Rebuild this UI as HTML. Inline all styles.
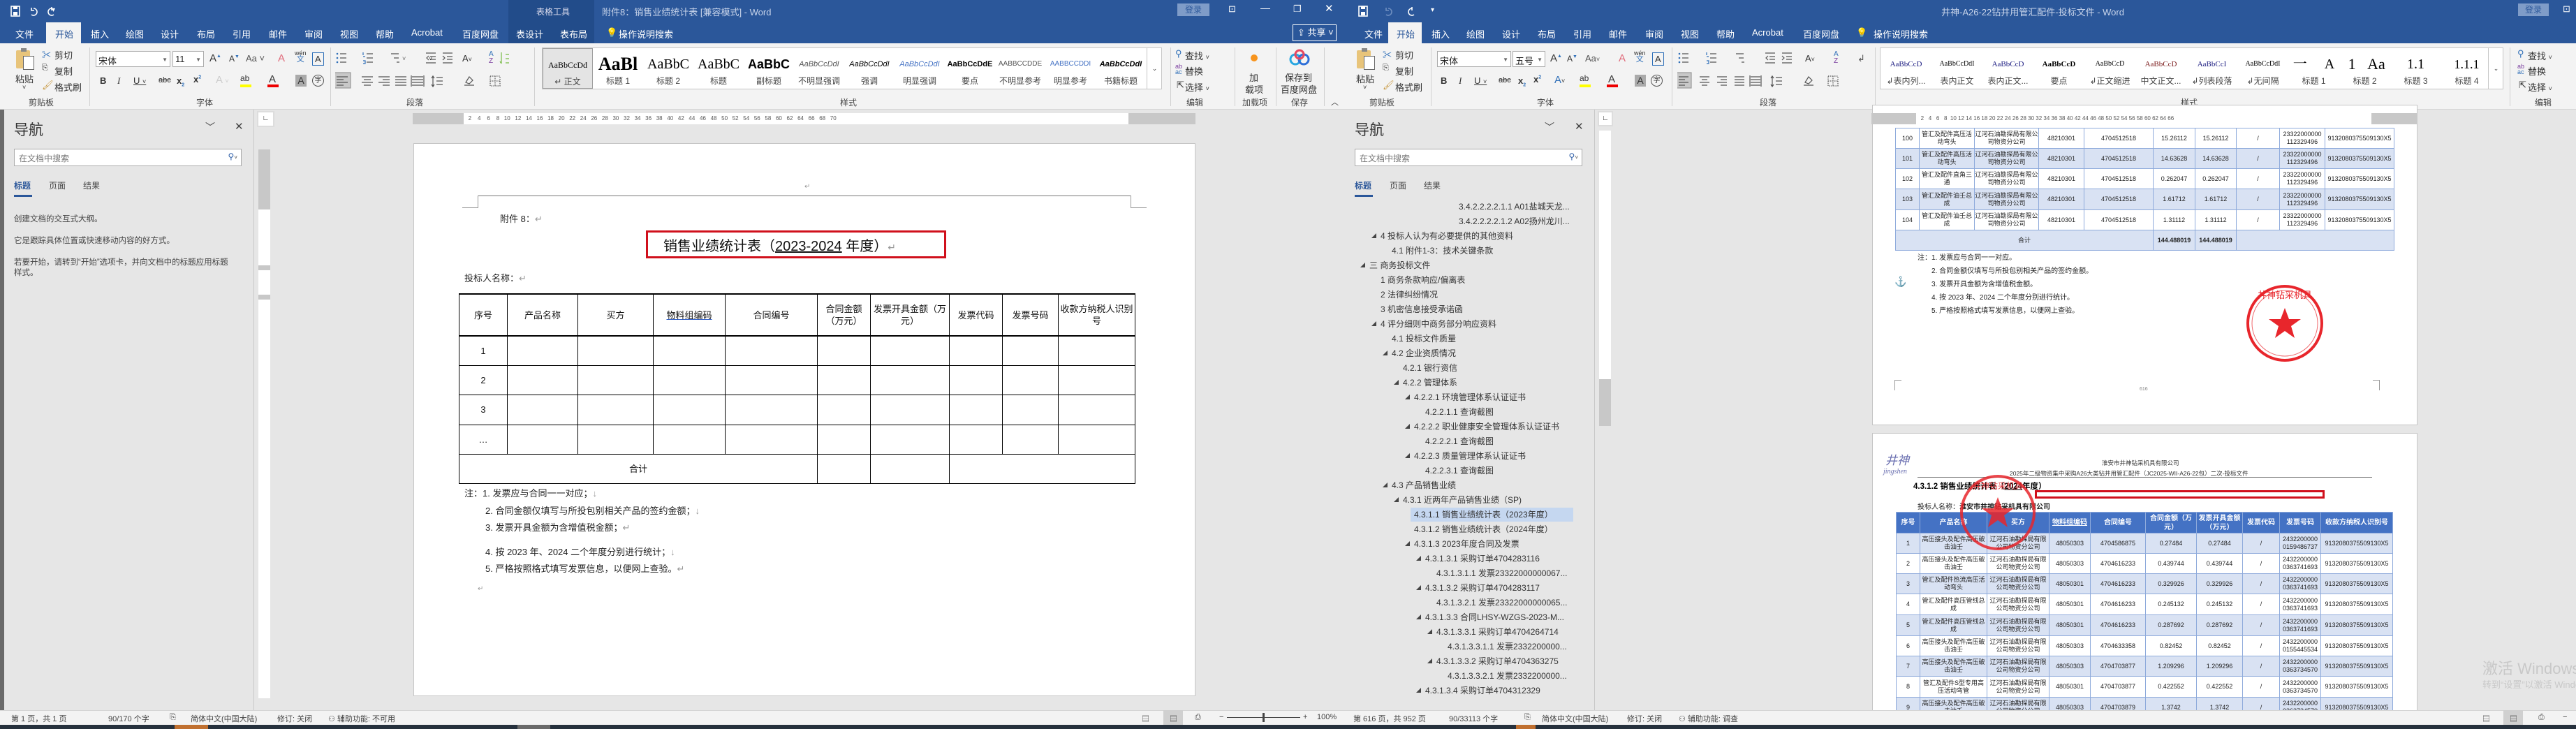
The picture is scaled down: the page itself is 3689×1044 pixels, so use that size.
<!DOCTYPE html>
<html><head><meta charset="utf-8">
<style>
*{margin:0;padding:0;box-sizing:border-box}
body{width:3689px;height:1044px;overflow:hidden;position:relative;background:#e6e6e6;font-family:"Liberation Sans","Noto Sans CJK SC",sans-serif;color:#222}
.a{position:absolute;white-space:nowrap}
.w{color:#fff}
.tab{position:absolute;top:39px;font-size:13px;color:#fff;white-space:nowrap}
.sm{font-size:12px;color:#333}
.gl{position:absolute;top:138px;font-size:12px;color:#444;white-space:nowrap}
.sep{position:absolute;top:68px;width:1px;height:84px;background:#d0d0d0}
.box{position:absolute;background:#fff;border:1px solid #ababab;font-size:13px;padding:3px 3px;color:#222}
.ic{position:absolute;font-size:13px;color:#333;white-space:nowrap}
.gal{position:absolute;top:68px;height:60px;background:#fff;border:1px solid #c6c6c6;overflow:hidden}
.gi{position:absolute;top:0;width:72px;height:58px;overflow:hidden;text-align:center}
.gi .s{position:absolute;left:0;right:0;top:8px;height:30px;line-height:30px;font-family:"Liberation Serif","Noto Serif CJK SC",serif;font-size:12px;color:#000;overflow:hidden}
.gi .l{position:absolute;left:0;right:0;top:38px;font-size:12px;color:#444}
.nt{position:absolute;font-size:12px;color:#333;white-space:nowrap}
.tri{position:absolute;font-size:7px;color:#444}
table{border-collapse:collapse;position:absolute;table-layout:fixed}
.t1 td{border:1px solid #000;font-size:13px;text-align:center;vertical-align:middle;font-family:"Liberation Sans","Noto Sans CJK SC",sans-serif;line-height:17px;color:#111}
.t1 tr.h td{border-top:2px solid #000;border-bottom:2px solid #000}
.t2 td{border:1px solid #8eaadb;font-size:9px;line-height:11px;text-align:center;vertical-align:middle;color:#222;overflow:hidden;white-space:normal;font-family:"Liberation Sans","Noto Sans CJK SC",sans-serif}
.t2 tr.b td{background:#d9e2f3}
.t2 tr.hd td{background:#4472c4;color:#fff;font-weight:bold;font-size:10px;line-height:13px}
.st{position:absolute;font-size:11px;color:#444;white-space:nowrap;top:1021px}
</style></head><body>

<!-- ============ LEFT WINDOW ============ -->
<div class="a" style="left:0;top:0;width:1930px;height:62px;background:#2b579a"></div>
<div class="a" style="left:728px;top:0;width:123px;height:62px;background:#224c8a"></div>
<div class="a w" style="left:768px;top:8px;font-size:12px;color:#dde">表格工具</div>
<div class="a" style="left:862px;top:7px;font-size:13px;color:#c8d4ea">附件8：销售业绩统计表 [兼容模式]  -  Word</div>
<!-- quick access -->
<svg class="a" style="left:14px;top:7px" width="70" height="18"><rect x="2" y="2" width="12" height="14" fill="none" stroke="#fff" stroke-width="1.6"/><rect x="5" y="2" width="6" height="4" fill="#fff"/><rect x="5" y="10" width="6" height="5" fill="#fff"/><path d="M34 5 a5 5 0 1 1 -3 9 M31 4 v4 h4" fill="none" stroke="#fff" stroke-width="1.6"/><path d="M60 5 a5 5 0 1 0 3 9 M60 3 v5" fill="none" stroke="#fff" stroke-width="1.6"/></svg>
<div class="a w" style="left:74px;top:9px;font-size:10px">▾</div>
<div class="a" style="left:1686px;top:5px;width:46px;height:18px;background:#7f9cc8;color:#2b579a;font-size:12px;text-align:center;line-height:18px">登录</div>
<div class="a w" style="left:1759px;top:5px;font-size:13px">⊡</div>
<div class="a w" style="left:1805px;top:3px;font-size:14px">—</div>
<div class="a w" style="left:1852px;top:5px;font-size:13px">❐</div>
<div class="a w" style="left:1897px;top:3px;font-size:15px">✕</div>
<!-- tabs -->
<div class="tab" style="left:22px">文件</div>
<div class="a" style="left:66px;top:32px;width:50px;height:30px;background:#f3f3f3"></div>
<div class="tab" style="left:79px;color:#2b579a">开始</div>
<div class="tab" style="left:130px">插入</div><div class="tab" style="left:180px">绘图</div><div class="tab" style="left:230px">设计</div><div class="tab" style="left:282px">布局</div><div class="tab" style="left:333px">引用</div><div class="tab" style="left:385px">邮件</div><div class="tab" style="left:436px">审阅</div><div class="tab" style="left:487px">视图</div><div class="tab" style="left:538px">帮助</div><div class="tab" style="left:589px">Acrobat</div><div class="tab" style="left:662px">百度网盘</div><div class="tab" style="left:739px">表设计</div><div class="tab" style="left:802px">表布局</div>
<div class="tab" style="left:868px">💡</div><div class="tab" style="left:886px">操作说明搜索</div>
<div class="a" style="left:1851px;top:35px;width:63px;height:24px;border:1px solid #fff;color:#fff;font-size:13px;line-height:22px;padding-left:6px">⇪ 共享 ˅</div>
<!-- ribbon -->
<div class="a" style="left:0;top:62px;width:1930px;height:95px;background:#f3f3f3;border-bottom:1px solid #d5d5d5"></div>
<!-- clipboard -->
<div class="a" style="left:23px;top:72px;width:20px;height:26px;background:#e8c47a;border-radius:2px"></div>
<div class="a" style="left:30px;top:69px;width:8px;height:5px;background:#888"></div>
<div class="a" style="left:33px;top:80px;width:16px;height:20px;background:#fff;border:1px solid #666"></div>
<div class="ic" style="left:22px;top:103px">粘贴</div><div class="ic" style="left:32px;top:120px;font-size:9px">˅</div>
<div class="ic" style="left:60px;top:68px;color:#2f6fb8">✂</div><div class="ic" style="left:78px;top:69px">剪切</div>
<div class="ic" style="left:60px;top:91px;font-size:11px">⎘</div><div class="ic" style="left:78px;top:92px">复制</div>
<div class="ic" style="left:60px;top:114px;color:#c99a44">🖌</div><div class="ic" style="left:78px;top:115px">格式刷</div>
<div class="gl" style="left:41px">剪贴板</div>
<div class="sep" style="left:128px"></div>
<!-- font group -->
<div class="box" style="left:137px;top:73px;width:107px;height:23px">宋体<span style="float:right;font-size:8px;color:#666;margin-top:4px">▼</span></div>
<div class="box" style="left:247px;top:73px;width:45px;height:23px">11<span style="float:right;font-size:8px;color:#666;margin-top:4px">▼</span></div>
<div class="ic" style="left:300px;top:75px;font-size:15px">A<sup style="font-size:7px;color:#2f6fb8">▲</sup></div>
<div class="ic" style="left:328px;top:77px;font-size:12px">A<sup style="font-size:7px;color:#2f6fb8">▼</sup></div>
<div class="ic" style="left:352px;top:76px;color:#555">Aa ˅</div>
<div class="ic" style="left:398px;top:75px;color:#e06a7a;font-size:15px">A</div>
<div class="ic" style="left:422px;top:72px;font-size:9px;line-height:9px;text-align:center">wén<br><span style="color:#2f6fb8;font-size:11px">文</span></div>
<div class="ic" style="left:447px;top:75px;border:1px solid #2f6fb8;padding:0 3px;font-size:13px;line-height:17px">A</div>
<div class="ic" style="left:143px;top:108px;font-weight:bold">B</div>
<div class="ic" style="left:168px;top:108px;font-style:italic;font-family:'Liberation Serif',serif">I</div>
<div class="ic" style="left:191px;top:108px;text-decoration:underline">U <span style="font-size:9px">˅</span></div>
<div class="ic" style="left:227px;top:109px;font-size:11px;text-decoration:line-through">abc</div>
<div class="ic" style="left:253px;top:108px;font-weight:bold">x<sub style="font-size:7px;color:#2f6fb8">2</sub></div>
<div class="ic" style="left:277px;top:106px;font-weight:bold">x<sup style="font-size:7px;color:#2f6fb8">2</sup></div>
<div class="ic" style="left:309px;top:106px;font-size:15px;color:#ccc">A <span style="font-size:9px">˅</span></div>
<div class="ic" style="left:344px;top:105px;font-size:12px">ab</div><div class="a" style="left:344px;top:121px;width:16px;height:4px;background:#ffff00"></div>
<div class="ic" style="left:385px;top:105px;font-size:15px">A</div><div class="a" style="left:383px;top:121px;width:16px;height:4px;background:#e00"></div>
<div class="a" style="left:423px;top:107px;width:16px;height:17px;background:#aaa;font-size:14px;text-align:center;line-height:17px;color:#333">A</div>
<div class="ic" style="left:447px;top:107px;border:1px solid #555;border-radius:50%;width:17px;height:17px;font-size:10px;text-align:center;line-height:15px">字</div>
<div class="gl" style="left:281px">字体</div>
<div class="sep" style="left:473px"></div>
<!-- paragraph -->
<svg class="a" style="left:480px;top:74px" width="290" height="56" stroke="#555" stroke-width="1.2" fill="none">
<g><circle cx="3" cy="3" r="1.3" fill="#2f6fb8" stroke="none"/><circle cx="3" cy="9" r="1.3" fill="#2f6fb8" stroke="none"/><circle cx="3" cy="15" r="1.3" fill="#2f6fb8" stroke="none"/><path d="M7 3h9M7 9h9M7 15h9"/></g>
<g transform="translate(38,0)"><path d="M7 3h9M7 9h9M7 15h9"/><path d="M2 1v4M2 7h3M2 13h3v4h-3" stroke="#2f6fb8"/></g>
<g transform="translate(76,0)"><path d="M4 3h11M8 9h7M12 15h4"/></g>
<g transform="translate(128,0)"><path d="M2 2h14M8 7h8M8 11h8M2 16h14M6 6l-3 3 3 3" /></g>
<g transform="translate(152,0)"><path d="M2 2h14M8 7h8M8 11h8M2 16h14M2 6l3 3-3 3" /></g>
<g transform="translate(234,0)"><path d="M4 1v16M4 17l-2-3M10 4h5M10 10h5M10 16h5" stroke="#7b4"/></g>
<g transform="translate(0,34)"><rect x="-2" y="-4" width="24" height="22" fill="#c8c8c8" stroke="#999"/><path d="M2 2h16M2 6h10M2 10h16M2 14h10"/></g>
<g transform="translate(36,34)"><path d="M2 2h16M5 6h10M2 10h16M5 14h10"/></g>
<g transform="translate(60,34)"><path d="M2 2h16M8 6h10M2 10h16M8 14h10"/></g>
<g transform="translate(84,34)"><path d="M2 2h16M2 6h16M2 10h16M2 14h16"/></g>
<g transform="translate(108,34)"><path d="M2 2h16M2 6h16M2 10h16M2 14h16M1 0v16M19 0v16"/></g>
<g transform="translate(136,34)"><path d="M4 1v15M2 4l2-3 2 3M2 13l2 3 2-3M9 3h9M9 8h9M9 13h9" /></g>
<g transform="translate(182,34)"><path d="M3 14h14M5 10l5-8 5 5-5 5z"/></g>
<g transform="translate(220,34)" stroke-dasharray="1.5 1.5"><rect x="2" y="1" width="14" height="14"/><path d="M9 1v14M2 8h14"/></g>
</svg>
<div class="ic" style="left:576px;top:79px;font-size:9px;color:#666">˅</div><div class="ic" style="left:614px;top:79px;font-size:9px">˅</div><div class="ic" style="left:580px;top:110px;font-size:9px"></div>
<div class="ic" style="left:662px;top:76px;font-size:13px">A<span style="font-size:9px">˅</span></div>
<div class="ic" style="left:700px;top:73px;font-size:10px;line-height:10px;color:#2f6fb8">A<br><span style="color:#7b3fa0">Z</span></div>
<div class="gl" style="left:582px">段落</div>
<div class="sep" style="left:765px"></div>
<!-- styles gallery -->
<div class="gal" style="left:776px;width:888px">
 <div class="gi" style="left:0;background:#e4e4e4;border:1px solid #a0a0a0"><div class="s">AaBbCcDd</div><div class="l">↵ 正文</div></div>
 <div class="gi" style="left:72px"><div class="s" style="font-size:26px;font-weight:bold">AaBl</div><div class="l">标题 1</div></div>
 <div class="gi" style="left:144px"><div class="s" style="font-size:20px">AaBbC</div><div class="l">标题 2</div></div>
 <div class="gi" style="left:216px"><div class="s" style="font-size:20px">AaBbC</div><div class="l">标题</div></div>
 <div class="gi" style="left:288px"><div class="s" style="font-size:18px;font-weight:bold;font-family:'Liberation Sans',sans-serif">AaBbC</div><div class="l">副标题</div></div>
 <div class="gi" style="left:360px"><div class="s" style="font-style:italic;color:#555;font-family:'Liberation Sans',sans-serif;font-size:11px">AaBbCcDdI</div><div class="l">不明显强调</div></div>
 <div class="gi" style="left:432px"><div class="s" style="font-style:italic;font-family:'Liberation Sans',sans-serif;font-size:11px">AaBbCcDdI</div><div class="l">强调</div></div>
 <div class="gi" style="left:504px"><div class="s" style="font-style:italic;color:#4472c4;font-family:'Liberation Sans',sans-serif;font-size:11px">AaBbCcDdI</div><div class="l">明显强调</div></div>
 <div class="gi" style="left:576px"><div class="s" style="font-weight:bold;font-family:'Liberation Sans',sans-serif;font-size:11px">AaBbCcDdE</div><div class="l">要点</div></div>
 <div class="gi" style="left:648px"><div class="s" style="color:#555;font-family:'Liberation Sans',sans-serif;font-size:10px">AABBCCDDE</div><div class="l">不明显参考</div></div>
 <div class="gi" style="left:720px"><div class="s" style="color:#4472c4;font-family:'Liberation Sans',sans-serif;font-size:10px">AABBCCDDI</div><div class="l">明显参考</div></div>
 <div class="gi" style="left:792px;width:72px"><div class="s" style="font-weight:bold;font-style:italic;font-family:'Liberation Sans',sans-serif;font-size:11px">AaBbCcDdI</div><div class="l">书籍标题</div></div>
 <div class="a" style="left:865px;top:0;width:22px;height:58px;border-left:1px solid #c6c6c6;font-size:9px;text-align:center;padding-top:24px;color:#444">⌄</div>
</div>
<div class="gl" style="left:1203px">样式</div>
<div class="sep" style="left:1676px"></div>
<div class="ic" style="left:1683px;top:69px;color:#2f6fb8">⚲</div><div class="ic" style="left:1697px;top:70px">查找 <span style="font-size:9px">˅</span></div>
<div class="ic" style="left:1683px;top:91px;font-size:9px;line-height:8px;color:#7b3fa0">ab<br><span style="color:#2f6fb8">ac</span></div><div class="ic" style="left:1697px;top:92px">替换</div>
<div class="ic" style="left:1685px;top:114px">⇱</div><div class="ic" style="left:1697px;top:115px">选择 <span style="font-size:9px">˅</span></div>
<div class="gl" style="left:1699px">编辑</div>
<div class="sep" style="left:1768px"></div>
<div class="a" style="left:1791px;top:78px;width:10px;height:10px;border-radius:50%;background:#f7941d"></div>
<div class="ic" style="left:1789px;top:101px">加</div><div class="ic" style="left:1783px;top:118px">载项</div>
<div class="gl" style="left:1779px">加载项</div>
<div class="sep" style="left:1827px"></div>
<svg class="a" style="left:1846px;top:70px" width="30" height="26"><circle cx="9" cy="15" r="7" fill="none" stroke="#29a7e1" stroke-width="3"/><circle cx="21" cy="15" r="7" fill="none" stroke="#2f6fd8" stroke-width="3"/><circle cx="15" cy="8" r="6" fill="none" stroke="#e8465f" stroke-width="3"/></svg>
<div class="ic" style="left:1840px;top:101px">保存到</div><div class="ic" style="left:1834px;top:118px">百度网盘</div>
<div class="gl" style="left:1849px">保存</div>
<div class="sep" style="left:1896px"></div>
<div class="ic" style="left:1906px;top:138px;font-size:11px">︿</div>

<!-- left nav pane -->
<div class="a" style="left:0;top:157px;width:6px;height:860px;background:#6a6a6a"></div>
<div class="a" style="left:6px;top:157px;width:358px;height:860px;background:#e6e6e6;border-right:1px solid #c8c8c8"></div>
<div class="a" style="left:20px;top:170px;font-size:21px;color:#333">导航</div>
<div class="a" style="left:294px;top:172px;font-size:14px;color:#444">﹀</div>
<div class="a" style="left:336px;top:172px;font-size:15px;color:#444">✕</div>
<div class="a" style="left:20px;top:213px;width:326px;height:25px;background:#fff;border:1px solid #ababab;font-size:12px;color:#777;padding:4px 6px">在文档中搜索<span style="position:absolute;right:5px;top:3px;color:#2f5fa8">⚲<span style="font-size:8px;color:#444">˅</span></span></div>
<div class="a" style="left:20px;top:257px;font-size:12px;color:#2b579a;font-weight:bold">标题</div>
<div class="a" style="left:20px;top:279px;width:26px;height:3px;background:#2b579a"></div>
<div class="a" style="left:70px;top:257px;font-size:12px;color:#444">页面</div>
<div class="a" style="left:119px;top:257px;font-size:12px;color:#444">结果</div>
<div class="a" style="left:20px;top:305px;font-size:11.5px;color:#444">创建文档的交互式大纲。</div>
<div class="a" style="left:20px;top:336px;font-size:11.5px;color:#444">它是跟踪具体位置或快速移动内容的好方式。</div>
<div class="a" style="left:20px;top:367px;font-size:11.5px;color:#444">若要开始，请转到“开始”选项卡，并向文档中的标题应用标题</div>
<div class="a" style="left:20px;top:382px;font-size:11.5px;color:#444">样式。</div>

<!-- left doc area rulers -->
<div class="a" style="left:368px;top:159px;width:25px;height:23px;background:#fff;border:2px solid #ddd;font-size:10px;text-align:center;line-height:18px">∟</div>
<div class="a" style="left:591px;top:162px;width:1121px;height:16px;background:#c8c8c8"></div>
<div class="a" style="left:664px;top:162px;width:952px;height:16px;background:#fff;font-size:8px;color:#555;line-height:16px;letter-spacing:0">&nbsp;&nbsp;&nbsp;2&nbsp;&nbsp;&nbsp;&nbsp;4&nbsp;&nbsp;&nbsp;&nbsp;6&nbsp;&nbsp;&nbsp;&nbsp;8&nbsp;&nbsp;&nbsp;10&nbsp;&nbsp;&nbsp;12&nbsp;&nbsp;&nbsp;14&nbsp;&nbsp;&nbsp;16&nbsp;&nbsp;&nbsp;18&nbsp;&nbsp;&nbsp;20&nbsp;&nbsp;&nbsp;22&nbsp;&nbsp;&nbsp;24&nbsp;&nbsp;&nbsp;26&nbsp;&nbsp;&nbsp;28&nbsp;&nbsp;&nbsp;30&nbsp;&nbsp;&nbsp;32&nbsp;&nbsp;&nbsp;34&nbsp;&nbsp;&nbsp;36&nbsp;&nbsp;&nbsp;38&nbsp;&nbsp;&nbsp;40&nbsp;&nbsp;&nbsp;42&nbsp;&nbsp;&nbsp;44&nbsp;&nbsp;&nbsp;46&nbsp;&nbsp;&nbsp;48&nbsp;&nbsp;&nbsp;50&nbsp;&nbsp;&nbsp;52&nbsp;&nbsp;&nbsp;54&nbsp;&nbsp;&nbsp;56&nbsp;&nbsp;&nbsp;58&nbsp;&nbsp;&nbsp;60&nbsp;&nbsp;&nbsp;62&nbsp;&nbsp;&nbsp;64&nbsp;&nbsp;&nbsp;66&nbsp;&nbsp;&nbsp;68&nbsp;&nbsp;&nbsp;70</div>
<div class="a" style="left:370px;top:214px;width:17px;height:86px;background:#c8c8c8"></div>
<div class="a" style="left:370px;top:300px;width:17px;height:700px;background:#fff"></div>
<div class="a" style="left:370px;top:380px;width:17px;height:7px;background:#c8c8c8"></div>
<div class="a" style="left:370px;top:422px;width:17px;height:7px;background:#c8c8c8"></div>
<!-- left page -->
<div class="a" style="left:592px;top:205px;width:1120px;height:792px;background:#fff;border:1px solid #c6c6c6"></div>
<div class="a" style="left:1152px;top:262px;font-size:10px;color:#999">↵</div>
<div class="a" style="left:685px;top:280px;width:934px;height:1px;background:#777"></div>
<div class="a" style="left:662px;top:280px;width:23px;height:18px;border-right:1px solid #999;border-bottom:1px solid #999"></div>
<div class="a" style="left:1619px;top:280px;width:23px;height:18px;border-left:1px solid #999;border-bottom:1px solid #999"></div>
<div class="a" style="left:716px;top:303px;font-size:13px">附件 8：<span style="color:#999">↵</span></div>
<div class="a" style="left:925px;top:330px;width:430px;height:40px;border:3px solid #d0101c"></div>
<div class="a" style="left:950px;top:336px;font-size:20px;color:#111">销售业绩统计表（<u>2023-2024</u> 年度）<span style="color:#999;font-size:14px">↵</span></div>
<div class="a" style="left:665px;top:388px;font-size:13px">投标人名称：<span style="color:#999">↵</span></div>
<table class="t1" style="left:657px;top:420px;width:968px">
<colgroup><col style="width:69px"><col style="width:101px"><col style="width:108px"><col style="width:103px"><col style="width:132px"><col style="width:76px"><col style="width:113px"><col style="width:76px"><col style="width:80px"><col style="width:110px"></colgroup>
<tr class="h" style="height:60px"><td>序号</td><td>产品名称</td><td>买方</td><td><u style="text-decoration-color:#2f5fc8">物料组编码</u></td><td>合同编号</td><td>合同金额（万元）</td><td>发票开具金额（万元）</td><td>发票代码</td><td>发票号码</td><td>收款方纳税人识别号</td></tr>
<tr style="height:42px"><td>1</td><td></td><td></td><td></td><td></td><td></td><td></td><td></td><td></td><td></td></tr>
<tr style="height:42px"><td>2</td><td></td><td></td><td></td><td></td><td></td><td></td><td></td><td></td><td></td></tr>
<tr style="height:43px"><td>3</td><td></td><td></td><td></td><td></td><td></td><td></td><td></td><td></td><td></td></tr>
<tr style="height:42px"><td>…</td><td></td><td></td><td></td><td></td><td></td><td></td><td></td><td></td><td></td></tr>
<tr style="height:42px"><td colspan="5">合计</td><td></td><td></td><td colspan="3"></td></tr>
</table>
<div class="a" style="left:665px;top:696px;font-size:13px">注：1. 发票应与合同一一对应；<span style="color:#999">↓</span></div>
<div class="a" style="left:695px;top:721px;font-size:13px">2. 合同金额仅填写与所投包别相关产品的签约金额；<span style="color:#999">↓</span></div>
<div class="a" style="left:695px;top:745px;font-size:13px">3. 发票开具金额为含增值税金额；<span style="color:#999">↵</span></div>
<div class="a" style="left:695px;top:780px;font-size:13px">4. 按 2023 年、2024 二个年度分别进行统计；<span style="color:#999">↓</span></div>
<div class="a" style="left:695px;top:804px;font-size:13px">5. 严格按照格式填写发票信息，以便网上查验。<span style="color:#999">↵</span></div>
<div class="a" style="left:684px;top:838px;font-size:10px;color:#999">↵</div>

<!-- left status bar -->
<div class="a" style="left:0;top:1017px;width:1930px;height:21px;background:#f3f3f3;border-top:1px solid #d5d5d5"></div>
<div class="st" style="left:16px">第 1 页，共 1 页</div>
<div class="st" style="left:155px">90/170 个字</div>
<div class="st" style="left:243px">⎘</div>
<div class="st" style="left:273px">简体中文(中国大陆)</div>
<div class="st" style="left:397px">修订: 关闭</div>
<div class="st" style="left:470px">⚇ 辅助功能: 不可用</div>
<div class="st" style="left:1635px">▤</div>
<div class="a" style="left:1666px;top:1017px;width:28px;height:21px;background:#d0d0d0"></div>
<div class="st" style="left:1675px">▤</div>
<div class="st" style="left:1711px">⎙</div>
<div class="st" style="left:1746px">−</div>
<div class="a" style="left:1757px;top:1027px;width:105px;height:1px;background:#444"></div>
<div class="a" style="left:1808px;top:1021px;width:3px;height:13px;background:#444"></div>
<div class="st" style="left:1866px">+</div>
<div class="st" style="left:1886px">100%</div>

<!-- ============ RIGHT WINDOW ============ -->
<div class="a" style="left:1930px;top:0;width:1759px;height:62px;background:#2b579a"></div>
<svg class="a" style="left:1944px;top:7px" width="120" height="18"><rect x="2" y="2" width="12" height="14" fill="none" stroke="#fff" stroke-width="1.6"/><rect x="5" y="2" width="6" height="4" fill="#fff"/><rect x="5" y="10" width="6" height="5" fill="#fff"/><path d="M44 5 a5 5 0 1 1 -3 9 M41 4 v4 h4" fill="none" stroke="#6f8fc0" stroke-width="1.6"/><path d="M78 5 a5 5 0 1 0 3 9 M78 3 v5" fill="none" stroke="#fff" stroke-width="1.6"/></svg>
<div class="a w" style="left:2049px;top:9px;font-size:10px">▾</div>
<div class="a" style="left:2780px;top:7px;font-size:13px;color:#c8d4ea">井神-A26-22钻井用管汇配件-投标文件  -  Word</div>
<div class="a" style="left:3606px;top:5px;width:44px;height:18px;background:#7f9cc8;color:#2b579a;font-size:12px;text-align:center;line-height:18px">登录</div>
<div class="a w" style="left:3670px;top:5px;font-size:13px">⊡</div>
<div class="tab" style="left:1954px">文件</div>
<div class="a" style="left:1988px;top:32px;width:48px;height:30px;background:#f3f3f3"></div>
<div class="tab" style="left:2000px;color:#2b579a">开始</div>
<div class="tab" style="left:2050px">插入</div><div class="tab" style="left:2100px">绘图</div><div class="tab" style="left:2151px">设计</div><div class="tab" style="left:2202px">布局</div><div class="tab" style="left:2253px">引用</div><div class="tab" style="left:2304px">邮件</div><div class="tab" style="left:2356px">审阅</div><div class="tab" style="left:2407px">视图</div><div class="tab" style="left:2458px">帮助</div><div class="tab" style="left:2509px">Acrobat</div><div class="tab" style="left:2582px">百度网盘</div><div class="tab" style="left:2658px">💡</div><div class="tab" style="left:2683px">操作说明搜索</div>
<div class="a" style="left:1930px;top:62px;width:1759px;height:95px;background:#f3f3f3;border-bottom:1px solid #d5d5d5"></div>
<!-- clipboard -->
<div class="a" style="left:1943px;top:72px;width:20px;height:26px;background:#e8c47a;border-radius:2px"></div>
<div class="a" style="left:1950px;top:69px;width:8px;height:5px;background:#888"></div>
<div class="a" style="left:1953px;top:80px;width:16px;height:20px;background:#fff;border:1px solid #666"></div>
<div class="ic" style="left:1942px;top:103px">粘贴</div><div class="ic" style="left:1952px;top:120px;font-size:9px">˅</div>
<div class="ic" style="left:1980px;top:68px;color:#2f6fb8">✂</div><div class="ic" style="left:1998px;top:69px">剪切</div>
<div class="ic" style="left:1980px;top:91px;font-size:11px">⎘</div><div class="ic" style="left:1998px;top:92px">复制</div>
<div class="ic" style="left:1980px;top:114px;color:#c99a44">🖌</div><div class="ic" style="left:1998px;top:115px">格式刷</div>
<div class="gl" style="left:1961px">剪贴板</div>
<div class="sep" style="left:2049px"></div>
<div class="box" style="left:2058px;top:73px;width:106px;height:23px">宋体<span style="float:right;font-size:8px;color:#666;margin-top:4px">▼</span></div>
<div class="box" style="left:2166px;top:73px;width:47px;height:23px">五号<span style="float:right;font-size:8px;color:#666;margin-top:4px">▼</span></div>
<div class="ic" style="left:2220px;top:75px;font-size:15px">A<sup style="font-size:7px;color:#2f6fb8">▲</sup></div>
<div class="ic" style="left:2244px;top:77px;font-size:12px">A<sup style="font-size:7px;color:#2f6fb8">▼</sup></div>
<div class="ic" style="left:2270px;top:76px;color:#555">Aa<span style="font-size:9px">˅</span></div>
<div class="ic" style="left:2318px;top:75px;color:#e06a7a;font-size:15px">A</div>
<div class="ic" style="left:2340px;top:72px;font-size:9px;line-height:9px;text-align:center">wén<br><span style="color:#2f6fb8;font-size:11px">文</span></div>
<div class="ic" style="left:2366px;top:75px;border:1px solid #2f6fb8;padding:0 3px;font-size:13px;line-height:17px">A</div>
<div class="ic" style="left:2063px;top:108px;font-weight:bold">B</div>
<div class="ic" style="left:2089px;top:108px;font-style:italic;font-family:'Liberation Serif',serif">I</div>
<div class="ic" style="left:2111px;top:108px;text-decoration:underline">U <span style="font-size:9px">˅</span></div>
<div class="ic" style="left:2146px;top:109px;font-size:11px;text-decoration:line-through">abc</div>
<div class="ic" style="left:2174px;top:108px;font-weight:bold">x<sub style="font-size:7px;color:#2f6fb8">2</sub></div>
<div class="ic" style="left:2196px;top:106px;font-weight:bold">x<sup style="font-size:7px;color:#2f6fb8">2</sup></div>
<div class="ic" style="left:2226px;top:106px;font-size:15px;color:#2f6fb8">A<span style="font-size:9px;color:#333">˅</span></div>
<div class="ic" style="left:2262px;top:105px;font-size:12px">ab</div><div class="a" style="left:2262px;top:121px;width:16px;height:4px;background:#ffff00"></div>
<div class="ic" style="left:2303px;top:105px;font-size:15px">A</div><div class="a" style="left:2301px;top:121px;width:16px;height:4px;background:#e00"></div>
<div class="a" style="left:2341px;top:107px;width:16px;height:17px;background:#aaa;font-size:14px;text-align:center;line-height:17px;color:#333">A</div>
<div class="ic" style="left:2364px;top:107px;border:1px solid #555;border-radius:50%;width:17px;height:17px;font-size:10px;text-align:center;line-height:15px">字</div>
<div class="gl" style="left:2201px">字体</div>
<div class="sep" style="left:2394px"></div>
<svg class="a" style="left:2402px;top:74px" width="280" height="56" stroke="#555" stroke-width="1.2" fill="none">
<g><circle cx="3" cy="3" r="1.3" fill="#2f6fb8" stroke="none"/><circle cx="3" cy="9" r="1.3" fill="#2f6fb8" stroke="none"/><circle cx="3" cy="15" r="1.3" fill="#2f6fb8" stroke="none"/><path d="M7 3h9M7 9h9M7 15h9"/></g>
<g transform="translate(40,0)"><path d="M7 3h9M7 9h9M7 15h9"/><path d="M2 1v4M2 7h3M2 13h3v4h-3" stroke="#2f6fb8"/></g>
<g transform="translate(80,0)"><path d="M4 3h11M8 9h7M12 15h4"/></g>
<g transform="translate(124,0)"><path d="M2 2h14M8 7h8M8 11h8M2 16h14M6 6l-3 3 3 3" /></g>
<g transform="translate(148,0)"><path d="M2 2h14M8 7h8M8 11h8M2 16h14M2 6l3 3-3 3" /></g>
<g transform="translate(0,34)"><rect x="-2" y="-4" width="22" height="22" fill="#c8c8c8" stroke="#999"/><path d="M2 2h14M2 6h9M2 10h14M2 14h9"/></g>
<g transform="translate(30,34)"><path d="M2 2h14M5 6h8M2 10h14M5 14h8"/></g>
<g transform="translate(55,34)"><path d="M2 2h14M7 6h9M2 10h14M7 14h9"/></g>
<g transform="translate(80,34)"><path d="M2 2h14M2 6h14M2 10h14M2 14h14"/></g>
<g transform="translate(103,34)"><path d="M2 2h14M2 6h14M2 10h14M2 14h14M1 0v16M17 0v16"/></g>
<g transform="translate(132,34)"><path d="M4 1v15M2 4l2-3 2 3M2 13l2 3 2-3M9 3h9M9 8h9M9 13h9" /></g>
<g transform="translate(178,34)"><path d="M3 14h14M5 10l5-8 5 5-5 5z"/></g>
<g transform="translate(214,34)" stroke-dasharray="1.5 1.5"><rect x="2" y="1" width="14" height="14"/><path d="M9 1v14M2 8h14"/></g>
</svg>
<div class="ic" style="left:2585px;top:76px;font-size:13px">A<span style="font-size:9px">˅</span></div>
<div class="ic" style="left:2626px;top:73px;font-size:10px;line-height:10px;color:#2f6fb8">A<br><span style="color:#7b3fa0">Z</span></div>
<div class="ic" style="left:2660px;top:76px;color:#555">↲</div>
<div class="gl" style="left:2520px">段落</div>
<div class="sep" style="left:2685px"></div>
<div class="gal" style="left:2692px;width:893px">
 <div class="gi" style="left:0;width:73px"><div class="s" style="font-size:11px;color:#1a1a80">AaBbCcD</div><div class="l">↲表内列...</div></div>
 <div class="gi" style="left:73px;width:73px"><div class="s" style="font-size:10px">AaBbCcDdI</div><div class="l">表内正文</div></div>
 <div class="gi" style="left:146px;width:73px"><div class="s" style="font-size:11px;color:#1a1a80">AaBbCcD</div><div class="l">表内正文...</div></div>
 <div class="gi" style="left:219px;width:73px"><div class="s" style="font-size:11px;font-weight:bold">AaBbCcD</div><div class="l">要点</div></div>
 <div class="gi" style="left:292px;width:73px"><div class="s" style="font-size:10px">AaBbCcD</div><div class="l">↲正文缩进</div></div>
 <div class="gi" style="left:365px;width:73px"><div class="s" style="font-size:11px;color:#7a1a1a">AaBbCcD</div><div class="l">中文正文...</div></div>
 <div class="gi" style="left:438px;width:73px"><div class="s" style="font-size:11px;color:#1a1a80">AaBbCcI</div><div class="l">↲列表段落</div></div>
 <div class="gi" style="left:511px;width:73px"><div class="s" style="font-size:10px">AaBbCcDdI</div><div class="l">↲无间隔</div></div>
 <div class="gi" style="left:584px;width:73px"><div class="s" style="font-size:20px">一&nbsp;&nbsp;&nbsp;&nbsp;&nbsp;A</div><div class="l">标题 1</div></div>
 <div class="gi" style="left:657px;width:73px"><div class="s" style="font-size:22px">&nbsp;1&nbsp;&nbsp;&nbsp;Aa</div><div class="l">标题 2</div></div>
 <div class="gi" style="left:730px;width:73px"><div class="s" style="font-size:20px">1.1</div><div class="l">标题 3</div></div>
 <div class="gi" style="left:803px;width:73px"><div class="s" style="font-size:18px">1.1.1</div><div class="l">标题 4</div></div>
 <div class="a" style="left:870px;top:0;width:22px;height:58px;border-left:1px solid #c6c6c6;font-size:9px;text-align:center;padding-top:24px;color:#444">⌄</div>
</div>
<div class="gl" style="left:3123px">样式</div>
<div class="sep" style="left:3594px"></div>
<div class="ic" style="left:3605px;top:69px;color:#2f6fb8">⚲</div><div class="ic" style="left:3620px;top:70px">查找 <span style="font-size:9px">˅</span></div>
<div class="ic" style="left:3605px;top:91px;font-size:9px;line-height:8px;color:#7b3fa0">ab<br><span style="color:#2f6fb8">ac</span></div><div class="ic" style="left:3620px;top:92px">替换</div>
<div class="ic" style="left:3607px;top:114px">⇱</div><div class="ic" style="left:3620px;top:115px">选择 <span style="font-size:9px">˅</span></div>
<div class="gl" style="left:3630px">编辑</div>

<!-- right nav -->
<div class="a" style="left:1930px;top:157px;width:354px;height:860px;background:#e6e6e6;border-right:1px solid #c8c8c8"></div>
<div class="a" style="left:1940px;top:170px;font-size:21px;color:#333">导航</div>
<div class="a" style="left:2212px;top:172px;font-size:14px;color:#444">﹀</div>
<div class="a" style="left:2255px;top:172px;font-size:15px;color:#444">✕</div>
<div class="a" style="left:1940px;top:213px;width:326px;height:25px;background:#fff;border:1px solid #ababab;font-size:12px;color:#777;padding:4px 6px">在文档中搜索<span style="position:absolute;right:5px;top:3px;color:#2f5fa8">⚲<span style="font-size:8px;color:#444">˅</span></span></div>
<div class="a" style="left:1940px;top:257px;font-size:12px;color:#2b579a;font-weight:bold">标题</div>
<div class="a" style="left:1940px;top:279px;width:26px;height:3px;background:#2b579a"></div>
<div class="a" style="left:1990px;top:257px;font-size:12px;color:#444">页面</div>
<div class="a" style="left:2039px;top:257px;font-size:12px;color:#444">结果</div>
<div class="a" style="left:2020px;top:727px;width:233px;height:20px;background:#c5d7f0"></div>
<div class="nt" style="left:2089px;top:287px">3.4.2.2.2.2.1.1 A01盐城天龙...</div>
<div class="nt" style="left:2089px;top:308px">3.4.2.2.2.2.1.2 A02扬州龙川...</div>
<div class="tri" style="left:1964px;top:333px">◢</div><div class="nt" style="left:1977px;top:329px">4 投标人认为有必要提供的其他资料</div>
<div class="nt" style="left:1993px;top:350px">4.1 附件1-3：技术关键条款</div>
<div class="tri" style="left:1948px;top:375px">◢</div><div class="nt" style="left:1961px;top:371px">三 商务投标文件</div>
<div class="nt" style="left:1977px;top:392px">1 商务条款响应/偏离表</div>
<div class="nt" style="left:1977px;top:413px">2 法律纠纷情况</div>
<div class="nt" style="left:1977px;top:434px">3 机密信息接受承诺函</div>
<div class="tri" style="left:1964px;top:459px">◢</div><div class="nt" style="left:1977px;top:455px">4 评分细则中商务部分响应资料</div>
<div class="nt" style="left:1993px;top:476px">4.1 投标文件质量</div>
<div class="tri" style="left:1980px;top:501px">◢</div><div class="nt" style="left:1993px;top:497px">4.2 企业资质情况</div>
<div class="nt" style="left:2009px;top:518px">4.2.1 银行资信</div>
<div class="tri" style="left:1996px;top:543px">◢</div><div class="nt" style="left:2009px;top:539px">4.2.2 管理体系</div>
<div class="tri" style="left:2012px;top:564px">◢</div><div class="nt" style="left:2025px;top:560px">4.2.2.1 环境管理体系认证证书</div>
<div class="nt" style="left:2041px;top:581px">4.2.2.1.1 查询截图</div>
<div class="tri" style="left:2012px;top:606px">◢</div><div class="nt" style="left:2025px;top:602px">4.2.2.2 职业健康安全管理体系认证证书</div>
<div class="nt" style="left:2041px;top:623px">4.2.2.2.1 查询截图</div>
<div class="tri" style="left:2012px;top:648px">◢</div><div class="nt" style="left:2025px;top:644px">4.2.2.3 质量管理体系认证证书</div>
<div class="nt" style="left:2041px;top:665px">4.2.2.3.1 查询截图</div>
<div class="tri" style="left:1980px;top:690px">◢</div><div class="nt" style="left:1993px;top:686px">4.3 产品销售业绩</div>
<div class="tri" style="left:1996px;top:711px">◢</div><div class="nt" style="left:2009px;top:707px">4.3.1 近两年产品销售业绩（SP)</div>
<div class="nt" style="left:2025px;top:728px">4.3.1.1 销售业绩统计表（2023年度）</div>
<div class="nt" style="left:2025px;top:749px">4.3.1.2 销售业绩统计表（2024年度）</div>
<div class="tri" style="left:2012px;top:774px">◢</div><div class="nt" style="left:2025px;top:770px">4.3.1.3 2023年度合同及发票</div>
<div class="tri" style="left:2028px;top:795px">◢</div><div class="nt" style="left:2041px;top:791px">4.3.1.3.1 采购订单4704283116</div>
<div class="nt" style="left:2057px;top:812px">4.3.1.3.1.1 发票23322000000067...</div>
<div class="tri" style="left:2028px;top:837px">◢</div><div class="nt" style="left:2041px;top:833px">4.3.1.3.2 采购订单4704283117</div>
<div class="nt" style="left:2057px;top:854px">4.3.1.3.2.1 发票23322000000065...</div>
<div class="tri" style="left:2028px;top:879px">◢</div><div class="nt" style="left:2041px;top:875px">4.3.1.3.3 合同LHSY-WZGS-2023-M...</div>
<div class="tri" style="left:2044px;top:900px">◢</div><div class="nt" style="left:2057px;top:896px">4.3.1.3.3.1 采购订单4704264714</div>
<div class="nt" style="left:2073px;top:917px">4.3.1.3.3.1.1 发票2332200000...</div>
<div class="tri" style="left:2044px;top:942px">◢</div><div class="nt" style="left:2057px;top:938px">4.3.1.3.3.2 采购订单4704363275</div>
<div class="nt" style="left:2073px;top:959px">4.3.1.3.3.2.1 发票2332200000...</div>
<div class="tri" style="left:2028px;top:984px">◢</div><div class="nt" style="left:2041px;top:980px">4.3.1.3.4 采购订单4704312329</div>

<!-- right doc area -->
<div class="a" style="left:2288px;top:159px;width:22px;height:22px;background:#fff;border:2px solid #ddd;font-size:10px;text-align:center;line-height:18px">∟</div>
<div class="a" style="left:2290px;top:187px;width:17px;height:356px;background:#fff"></div>
<div class="a" style="left:2290px;top:543px;width:17px;height:67px;background:#c8c8c8"></div>
<!-- page 1 -->
<div class="a" style="left:2681px;top:150px;width:781px;height:459px;background:#fff;border:1px solid #c6c6c6"></div>
<table class="t2" style="left:2714px;top:183px;width:714px">
<colgroup><col style="width:34px"><col style="width:79px"><col style="width:92px"><col style="width:65px"><col style="width:99px"><col style="width:60px"><col style="width:59px"><col style="width:62px"><col style="width:65px"><col style="width:99px"></colgroup>
<tr style="height:29px"><td>100</td><td>管汇及配件高压活动弯头</td><td>辽河石油勘探局有限公司物资分公司</td><td>48210301</td><td>4704512518</td><td>15.26112</td><td>15.26112</td><td>/</td><td>23322000000 112329496</td><td>9132080375509130X5</td></tr>
<tr class="b" style="height:29px"><td>101</td><td>管汇及配件高压活动弯头</td><td>辽河石油勘探局有限公司物资分公司</td><td>48210301</td><td>4704512518</td><td>14.63628</td><td>14.63628</td><td>/</td><td>23322000000 112329496</td><td>9132080375509130X5</td></tr>
<tr style="height:29px"><td>102</td><td>管汇及配件直角三通</td><td>辽河石油勘探局有限公司物资分公司</td><td>48210301</td><td>4704512518</td><td>0.262047</td><td>0.262047</td><td>/</td><td>23322000000 112329496</td><td>9132080375509130X5</td></tr>
<tr class="b" style="height:30px"><td>103</td><td>管汇及配件油壬总成</td><td>辽河石油勘探局有限公司物资分公司</td><td>48210301</td><td>4704512518</td><td>1.61712</td><td>1.61712</td><td>/</td><td>23322000000 112329496</td><td>9132080375509130X5</td></tr>
<tr style="height:29px"><td>104</td><td>管汇及配件油壬总成</td><td>辽河石油勘探局有限公司物资分公司</td><td>48210301</td><td>4704512518</td><td>1.31112</td><td>1.31112</td><td>/</td><td>23322000000 112329496</td><td>9132080375509130X5</td></tr>
<tr class="b" style="height:29px"><td colspan="5">合计</td><td style="font-weight:bold">144.488019</td><td style="font-weight:bold">144.488019</td><td colspan="3"></td></tr>
</table>
<div class="a" style="left:2746px;top:360px;font-size:10px">注：1. 发票应与合同一一对应。</div>
<div class="a" style="left:2766px;top:379px;font-size:10px">2. 合同金额仅填写与所投包别相关产品的签约金额。</div>
<div class="a" style="left:2713px;top:395px;font-size:14px;color:#2f6fb8">⚓</div>
<div class="a" style="left:2766px;top:398px;font-size:10px">3. 发票开具金额为含增值税金额。</div>
<div class="a" style="left:2766px;top:417px;font-size:10px">4. 按 2023 年、2024 二个年度分别进行统计。</div>
<div class="a" style="left:2766px;top:436px;font-size:10px">5. 严格按照格式填写发票信息，以便网上查验。</div>
<svg class="a" style="left:3212px;top:403px" width="120" height="120"><circle cx="60" cy="60" r="53" fill="none" stroke="#e8262c" stroke-width="4"/><circle cx="60" cy="60" r="47" fill="none" stroke="#f06a6e" stroke-width="1"/><polygon points="60,38 66,54 83,54 69,64 74,81 60,71 46,81 51,64 37,54 54,54" fill="#e8262c"/><text x="60" y="24" font-size="13" fill="#e8262c" text-anchor="middle" font-family="Noto Sans CJK SC">井神钻采机具</text></svg>
<div class="a" style="left:2713px;top:544px;width:10px;height:15px;border-top:1px solid #999;border-left:1px solid #999"></div>
<div class="a" style="left:3398px;top:544px;width:10px;height:15px;border-top:1px solid #999;border-right:1px solid #999"></div>
<div class="a" style="left:3064px;top:554px;font-size:7px;color:#888">616</div>
<!-- right horizontal ruler -->
<div class="a" style="left:2680px;top:162px;width:782px;height:16px;background:#c8c8c8"></div>
<div class="a" style="left:2744px;top:162px;width:652px;height:16px;background:#fff;font-size:8px;color:#555;line-height:16px">&nbsp;&nbsp;&nbsp;2&nbsp;&nbsp;&nbsp;4&nbsp;&nbsp;&nbsp;6&nbsp;&nbsp;&nbsp;8&nbsp;&nbsp;10&nbsp;12&nbsp;14&nbsp;16&nbsp;18&nbsp;20&nbsp;22&nbsp;24&nbsp;26&nbsp;28&nbsp;30&nbsp;32&nbsp;34&nbsp;36&nbsp;38&nbsp;40&nbsp;42&nbsp;44&nbsp;46&nbsp;48&nbsp;50&nbsp;52&nbsp;54&nbsp;56&nbsp;58&nbsp;60&nbsp;62&nbsp;64&nbsp;66</div>
<!-- page 2 -->
<div class="a" style="left:2681px;top:620px;width:781px;height:400px;background:#fff;border:1px solid #c6c6c6"></div>
<div class="a" style="left:2700px;top:645px;font-size:17px;color:#6a6fb0;font-family:'Liberation Serif',serif;font-style:italic">井神</div>
<div class="a" style="left:2697px;top:670px;font-size:10px;color:#6a6fb0;font-family:'Liberation Serif',serif;font-style:italic">jingshen</div>
<div class="a" style="left:3010px;top:657px;font-size:8.5px;color:#333">淮安市井神钻采机具有限公司</div>
<div class="a" style="left:2878px;top:672px;font-size:8.5px;color:#333">2025年二级物资集中采购A26大类钻井用管汇配件（JC2025-WII-A26-22包）二次-投标文件</div>
<div class="a" style="left:2746px;top:683px;width:651px;height:1px;background:#777"></div>
<div class="a" style="left:2740px;top:688px;font-size:11.5px;font-weight:bold;color:#000">4.3.1.2 销售业绩统计表（<u>2024</u>年度）</div>
<div class="a" style="left:2914px;top:702px;width:415px;height:12px;border:3px solid #d0101c"></div>
<div class="a" style="left:2746px;top:717px;font-size:10px">投标人名称：<b>淮安市井神钻采机具有限公司</b></div>
<table class="t2" style="left:2715px;top:733px;width:711px">
<colgroup><col style="width:34px"><col style="width:96px"><col style="width:89px"><col style="width:59px"><col style="width:79px"><col style="width:73px"><col style="width:66px"><col style="width:53px"><col style="width:59px"><col style="width:103px"></colgroup>
<tr class="hd" style="height:30px"><td>序号</td><td>产品名称</td><td>买方</td><td><u>物料组编码</u></td><td>合同编号</td><td>合同金额（万元）</td><td>发票开具金额（万元）</td><td>发票代码</td><td>发票号码</td><td>收款方纳税人识别号</td></tr>
<tr class="b" style="height:29px"><td>1</td><td>高压接头及配件高压破击油壬</td><td>辽河石油勘探局有限公司物资分公司</td><td>48050303</td><td>4704586875</td><td>0.27484</td><td>0.27484</td><td>/</td><td>2432200000 0159486737</td><td>9132080375509130X5</td></tr>
<tr style="height:29px"><td>2</td><td>高压接头及配件高压破击油壬</td><td>辽河石油勘探局有限公司物资分公司</td><td>48050303</td><td>4704616233</td><td>0.439744</td><td>0.439744</td><td>/</td><td>2432200000 0363741693</td><td>9132080375509130X5</td></tr>
<tr class="b" style="height:29px"><td>3</td><td>管汇及配件热流高压活动弯头</td><td>辽河石油勘探局有限公司物资分公司</td><td>48050301</td><td>4704616233</td><td>0.329926</td><td>0.329926</td><td>/</td><td>2432200000 0363741693</td><td>9132080375509130X5</td></tr>
<tr style="height:30px"><td>4</td><td>管汇及配件高压管线总成</td><td>辽河石油勘探局有限公司物资分公司</td><td>48050301</td><td>4704616233</td><td>0.245132</td><td>0.245132</td><td>/</td><td>2432200000 0363741693</td><td>9132080375509130X5</td></tr>
<tr class="b" style="height:30px"><td>5</td><td>管汇及配件高压管线总成</td><td>辽河石油勘探局有限公司物资分公司</td><td>48050301</td><td>4704616233</td><td>0.287692</td><td>0.287692</td><td>/</td><td>2432200000 0363741693</td><td>9132080375509130X5</td></tr>
<tr style="height:29px"><td>6</td><td>高压接头及配件高压破击油壬</td><td>辽河石油勘探局有限公司物资分公司</td><td>48050303</td><td>4704633358</td><td>0.82452</td><td>0.82452</td><td>/</td><td>2432200000 0155445534</td><td>9132080375509130X5</td></tr>
<tr class="b" style="height:29px"><td>7</td><td>高压接头及配件高压破击油壬</td><td>辽河石油勘探局有限公司物资分公司</td><td>48050303</td><td>4704703877</td><td>1.209296</td><td>1.209296</td><td>/</td><td>2432200000 0363734570</td><td>9132080375509130X5</td></tr>
<tr style="height:30px"><td>8</td><td>管汇及配件S型专用高压活动弯管</td><td>辽河石油勘探局有限公司物资分公司</td><td>48050301</td><td>4704703877</td><td>0.422552</td><td>0.422552</td><td>/</td><td>2432200000 0363734570</td><td>9132080375509130X5</td></tr>
<tr class="b" style="height:29px"><td>9</td><td>高压接头及配件高压破击油壬</td><td>辽河石油勘探局有限公司物资分公司</td><td>48050303</td><td>4704703879</td><td>1.3742</td><td>1.3742</td><td>/</td><td>2432200000 0363734570</td><td>9132080375509130X5</td></tr>
</table>
<svg class="a" style="left:2805px;top:678px;opacity:.85" width="112" height="112"><circle cx="56" cy="56" r="52" fill="none" stroke="#e8262c" stroke-width="4"/><polygon points="56,34 62,50 79,50 65,60 70,77 56,67 42,77 47,60 33,50 50,50" fill="#e8262c"/><text x="56" y="22" font-size="12" fill="#e8262c" text-anchor="middle" font-family="Noto Sans CJK SC">井神钻采机具</text></svg>
<div class="a" style="left:3555px;top:940px;font-size:22px;color:#c8c8c8">激活 Windows</div>
<div class="a" style="left:3555px;top:970px;font-size:13px;color:#c8c8c8">转到“设置”以激活 Windows。</div>

<!-- right status bar -->
<div class="a" style="left:1930px;top:1017px;width:1759px;height:21px;background:#f3f3f3;border-top:1px solid #d5d5d5"></div>
<div class="st" style="left:1938px">第 616 页，共 952 页</div>
<div class="st" style="left:2075px">90/33113 个字</div>
<div class="st" style="left:2183px">⎘</div>
<div class="st" style="left:2208px">简体中文(中国大陆)</div>
<div class="st" style="left:2330px">修订: 关闭</div>
<div class="st" style="left:2404px">⚇ 辅助功能: 调查</div>
<div class="st" style="left:3555px">▤</div>
<div class="a" style="left:3585px;top:1017px;width:28px;height:21px;background:#d0d0d0"></div>
<div class="st" style="left:3594px">▤</div>
<div class="st" style="left:3635px">⎙</div>
<div class="st" style="left:3670px">−</div>
<!-- taskbar -->
<div class="a" style="left:0;top:1038px;width:3689px;height:6px;background:#26313d"></div>
<div class="a" style="left:250px;top:1038px;width:48px;height:6px;background:#c07030"></div>
<div class="a" style="left:741px;top:1038px;width:47px;height:6px;background:#6a6a6a"></div>
<div class="a" style="left:2171px;top:1038px;width:28px;height:6px;background:#c07030"></div>
</body></html>
